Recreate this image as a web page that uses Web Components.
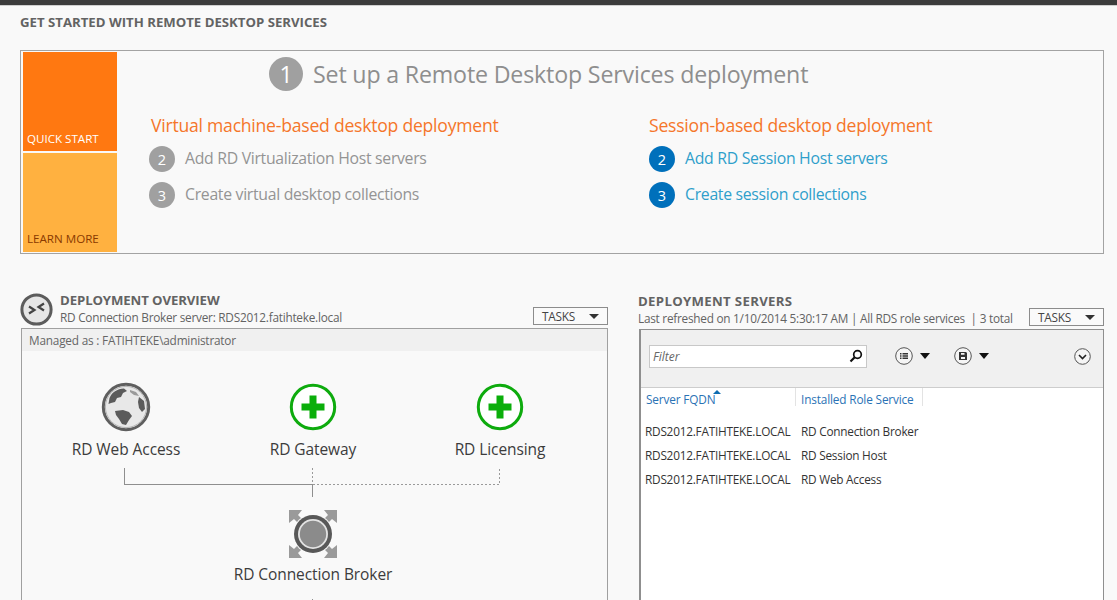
<!DOCTYPE html>
<html lang="en"><head><meta charset="utf-8"><title>Remote Desktop Services</title>
<style>
html,body{margin:0;height:600px;overflow:hidden;background:#f9f9f9;font-family:"Open Sans","Noto Sans",sans-serif;}
</style></head><body>
<rds-page></rds-page>
<script>
const def=(name,css,html)=>customElements.define(name,class extends HTMLElement{
  connectedCallback(){ if(this.shadowRoot)return; const r=this.attachShadow({mode:'open'});
    const a=n=>this.getAttribute(n)||'';
    r.innerHTML=`<style>${css}</style>`+(typeof html==='function'?html(a):html);}
});
def('rds-tile',`:host{display:flex;align-items:flex-end;box-sizing:border-box;width:94px;padding:0 0 5px 4px;font-size:11.6px;letter-spacing:0;line-height:16px;}`,`<slot></slot>`);
def('rds-step',`:host{display:flex;align-items:center;height:26px;font-size:15.8px;letter-spacing:-.3px;color:var(--step-text,#949494)}
 b{flex:none;width:26px;height:26px;border-radius:50%;background:var(--step-bg,#a0a0a0);color:#fff;font-weight:400;font-size:14.5px;letter-spacing:0;display:flex;align-items:center;justify-content:center;margin-right:10px}
 span{position:relative;top:-1px}`,
 a=>`<b>${a('n')}</b><span><slot></slot></span>`);
def('rds-track',`:host{display:flex;flex-direction:column;}
 h3{margin:0 0 9px var(--title-x,0);font-weight:400;font-size:17.6px;letter-spacing:-.24px;line-height:24px;color:#f5762a}
 .list{display:flex;flex-direction:column;gap:10px}`,
 a=>`<h3>${a('title')}</h3><div class="list"><slot></slot></div>`);
def('rds-quickstart',`:host{display:flex;box-sizing:border-box;width:1084px;height:204px;border:1px solid #a3a3a3;padding:1px 0 1px 2px;background:#f9f9f9}
 .tiles{display:flex;flex-direction:column;gap:2px;width:94px;flex:none}
 rds-tile{flex:1}
 .q{background:#ff7811;color:#fff;padding-bottom:4px}.l{background:#ffb140;color:#8a3a00}
 .main{flex:1;display:flex;flex-direction:column;padding-top:5px}
 .hero{display:flex;align-items:center;margin-left:152px;height:34px;font-size:23.2px;letter-spacing:-.17px;color:#8e8e8e}
 .hero b{flex:none;width:34px;height:34px;border-radius:50%;background:#a0a0a0;color:#fff;font-weight:400;font-size:23px;display:flex;align-items:center;justify-content:center;margin-right:10px}
 .cols{display:flex;margin:22px 0 0 32px}
 .c1{width:500px;--title-x:2px}
 .blue{--step-bg:#0070bb;--step-text:#2f9fcb}`,
 `<div class="tiles"><rds-tile class="q">QUICK START</rds-tile><rds-tile class="l">LEARN MORE</rds-tile></div>
 <div class="main"><div class="hero"><b>1</b>Set up a Remote Desktop Services deployment</div>
 <div class="cols"><rds-track class="c1" title="Virtual machine-based desktop deployment"><rds-step n="2">Add RD Virtualization Host servers</rds-step><rds-step n="3">Create virtual desktop collections</rds-step></rds-track>
 <rds-track class="blue" title="Session-based desktop deployment"><rds-step n="2">Add RD Session Host servers</rds-step><rds-step n="3">Create session collections</rds-step></rds-track></div></div>`);
def('rds-tasks',`:host{display:flex;align-items:center;justify-content:space-between;box-sizing:border-box;width:75px;height:18px;border:1px solid #8c8c8c;padding:0 8px;font-size:11.8px;letter-spacing:-.25px;color:#444;background:#fafafa;margin-bottom:var(--tasks-mb,1px)}
 i{width:0;height:0;border:5px solid transparent;border-top:5px solid #333;border-bottom:0}`,`TASKS<i></i>`);
def('rds-head',`:host{display:flex;align-items:flex-end;justify-content:space-between;height:36px;}
 .l{display:flex;align-items:center;gap:7px;margin-bottom:var(--l-mb,0)}
 .t{display:flex;flex-direction:column}
 strong{font-size:13.2px;line-height:18px;letter-spacing:var(--tls,-.1px);color:#636363;font-weight:700}
 span{font-size:11.8px;line-height:17px;letter-spacing:-.25px;color:#636363}
 ::slotted(svg){flex:none;margin-top:2px}`,
 a=>`<div class="l"><slot name="icon"></slot><div class="t"><strong>${a('title')}</strong><span>${a('sub')}</span></div></div><rds-tasks></rds-tasks>`);
def('rds-node',`:host{position:absolute;width:180px;margin-left:-90px;display:flex;flex-direction:column;align-items:center;font-size:15.5px;letter-spacing:-.08px;line-height:20px;color:#3c3c3c}
 .i{height:48px;display:flex;align-items:center;margin-bottom:var(--gap,8px)}`,`<div class="i"><slot name="icon"></slot></div><slot></slot>`);
const plus=`<svg slot="icon" width="48" height="48" viewBox="0 0 48 48"><circle cx="24" cy="24" r="21.7" fill="#fff" stroke="#0eab0e" stroke-width="3"/><path d="M20.5 12.5h7v8h8v7h-8v8h-7v-8h-8v-7h8z" fill="#0aae0a"/></svg>`;
const globe=`<svg slot="icon" width="50" height="50" viewBox="0 0 50 50"><circle cx="25" cy="25" r="22.7" fill="#ececec" stroke="#5f5f5f" stroke-width="3"/><circle cx="25" cy="25" r="20.6" fill="#e8e8e8" stroke="#b5b5b5"/><g fill="#5b5b5b"><path d="M8.500 16C11 10 16 7 23 6.500L26 9l-4 2-2 4-4 1-2 4-4 1-2.500 1z"/><path d="M38 15l5 4 1 8-3 3-3-4-1-6z"/><path d="M14 29l8-1 6 2 3 4-3 4-3 5-4-1-3-5-3-4z"/><path d="M29 8l6 2 3 4-5-1-4-3z" fill="#9a9a9a"/></g></svg>`;
const arrow=`<path d="M0 0H13L9 5 13 9 9 13 5 9 0 13Z" fill="#9a9a9a"/>`;
const broker=`<svg slot="icon" width="48" height="48" viewBox="0 0 48 48">${arrow}<g transform="rotate(90 24 24)">${arrow}</g><g transform="rotate(180 24 24)">${arrow}</g><g transform="rotate(270 24 24)">${arrow}</g><circle cx="24" cy="24" r="20" fill="#f9f9f9"/><circle cx="24" cy="24" r="19" fill="#585858"/><circle cx="24" cy="24" r="15" fill="#e3e3e3"/><circle cx="24" cy="24" r="13.200" fill="#8b8b8b"/></svg>`;
def('rds-diagram',`:host{display:block;position:relative;height:250px}
 svg.l{position:absolute;left:0;top:0}`,
 `<svg class="l" width="586" height="250" shape-rendering="crispEdges"><path d="M102.500 117V133H290.500" fill="none" stroke="#8f8f8f"/><path d="M290.500 133V146" stroke="#8f8f8f"/><path d="M290.500 117V133H477.500V117" fill="none" stroke="#9a9a9a" stroke-dasharray="2 2"/><path d="M290.500 248v4" stroke="#8f8f8f"/></svg>
 <rds-node style="left:104px;top:32px">${globe}RD Web Access</rds-node>
 <rds-node style="left:291px;top:32px">${plus}RD Gateway</rds-node>
 <rds-node style="left:478px;top:32px">${plus}RD Licensing</rds-node>
 <rds-node style="left:291px;top:159px;--gap:6px">${broker}RD Connection Broker</rds-node>`);
def('rds-overview',`:host{display:flex;flex-direction:column;width:588px;--tasks-mb:2px;--l-mb:1px}
 .p{margin:1px 0 0 1px;border:1px solid #a0a0a0;border-bottom:0;height:280px;box-sizing:border-box;overflow:hidden}
 .m{height:22px;background:#f0f0f0;padding-left:7px;font-size:11.8px;line-height:23px;letter-spacing:-.2px;color:#666}`,
 `<rds-head title="DEPLOYMENT OVERVIEW" sub="RD Connection Broker server: RDS2012.fatihteke.local"><svg slot="icon" width="33" height="33" viewBox="0 0 33 33"><circle cx="16.500" cy="16.500" r="14.600" fill="#e6e6e6" stroke="#5c5c5c" stroke-width="3"/><path d="M9 13.500l5.500 3.500-5.500 3.500M24 10.500l-5.500 3.500 5.500 3.500" fill="none" stroke="#444" stroke-width="2.200"/></svg></rds-head>
 <div class="p"><div class="m">Managed as : FATIHTEKE\\administrator</div><rds-diagram></rds-diagram></div>`);
def('rds-toolbar',`:host{display:flex;align-items:center;box-sizing:border-box;height:58px;background:#f0f0f0;border-bottom:1px solid #cdcdcd;padding:0 12px 5px 8px}
 .f{display:flex;align-items:center;justify-content:space-between;box-sizing:border-box;width:218px;height:23px;background:#fff;border:1px solid #c8c8c8;padding:0 3px 0 3px;font-style:italic;font-size:12px;letter-spacing:0;color:#666}
 .b{display:flex;align-items:center;gap:7px}
 .b i{width:0;height:0;border:5.500px solid transparent;border-top:6px solid #111;border-bottom:0}
 .b1{margin-left:28px}.b2{margin-left:24px}
 .sp{flex:1}`,
 `<div class="f">Filter<svg width="14" height="14" viewBox="0 0 14 14"><circle cx="8.500" cy="5.500" r="3.800" fill="none" stroke="#111" stroke-width="1.700"/><path d="M5.700 8.300L1.500 12.500" stroke="#111" stroke-width="2.200"/></svg></div>
 <div class="b b1"><svg width="18" height="18" viewBox="0 0 18 18"><circle cx="9" cy="9" r="8.300" fill="#f5f5f5" stroke="#555"/><path d="M5 6h1.500v1.500H5zM5 8.300h1.500v1.500H5zM5 10.600h1.500v1.500H5zM7.500 6H13v1.500H7.500zM7.500 8.300H13v1.500H7.500zM7.500 10.600H13v1.500H7.500z" fill="#333"/></svg><i></i></div>
 <div class="b b2"><svg width="18" height="18" viewBox="0 0 18 18"><circle cx="9" cy="9" r="8.300" fill="#f5f5f5" stroke="#555"/><path d="M5 5h7l1 1v7H5z" fill="#333"/><path d="M7 6h3.500v1.700H7zM7 10h4v2H7z" fill="#f5f5f5"/></svg><i></i></div>
 <div class="sp"></div>
 <svg width="17" height="17" viewBox="0 0 17 17"><circle cx="8.500" cy="8.500" r="7.800" fill="#f5f5f5" stroke="#555"/><path d="M5 7l3.500 3.500L12 7" fill="none" stroke="#222" stroke-width="1.600"/></svg>`);
def('rds-grid',`:host{display:block;background:#fff;height:220px}
 .h{display:flex;height:18px;font-size:11.8px;line-height:22px;letter-spacing:-.15px;color:#2a72b5;position:relative}
 .h div{box-sizing:border-box;border-right:1px solid #e3e3e3;padding-left:5px}
 .a{position:absolute;left:72px;top:2px;width:0;height:0;border:4px solid transparent;border-bottom:4px solid #0d6cb0;border-top:0}
 .r{display:grid;grid-template-columns:156px 1fr;height:24px;font-size:11.8px;line-height:24px;letter-spacing:-.23px;color:#333;padding-left:4px}
 .rows{padding-top:13px}`,
 `<div class="h"><div style="width:155px">Server FQDN</div><div style="width:127px">Installed Role Service</div><span class="a"></span></div>
 <div class="rows"><div class="r"><span>RDS2012.FATIHTEKE.LOCAL</span><span>RD Connection Broker</span></div>
 <div class="r"><span>RDS2012.FATIHTEKE.LOCAL</span><span>RD Session Host</span></div>
 <div class="r"><span>RDS2012.FATIHTEKE.LOCAL</span><span>RD Web Access</span></div></div>`);
def('rds-servers',`:host{display:flex;flex-direction:column;width:466px;--tls:.33px}
 .p{margin-top:2px;margin-left:1px;box-sizing:border-box;height:280px;border:1px solid #8f8f8f;border-bottom:0;border-left-width:2px;overflow:hidden}`,
 `<rds-head title="DEPLOYMENT SERVERS" sub="Last refreshed on 1/10/2014 5:30:17 AM | All RDS role services &nbsp;| 3 total"></rds-head>
 <div class="p"><rds-toolbar></rds-toolbar><rds-grid></rds-grid></div>`);
def('rds-page',`:host{display:block;height:600px;overflow:hidden}
 .top{height:5px;background:#3c3c3c;border-bottom:1px solid #cfcfcf}
 main{padding:0 0 0 20px}
 h1{margin:0;height:44px;font-size:13.2px;line-height:33px;letter-spacing:0;color:#636363;font-weight:700}
 .low{display:grid;grid-template-columns:588px 466px;column-gap:30px;margin-top:37px}`,
 `<div class="top"></div><main><h1>GET STARTED WITH REMOTE DESKTOP SERVICES</h1><rds-quickstart></rds-quickstart>
 <div class="low"><rds-overview></rds-overview><rds-servers></rds-servers></div></main>`);
</script></body></html>
